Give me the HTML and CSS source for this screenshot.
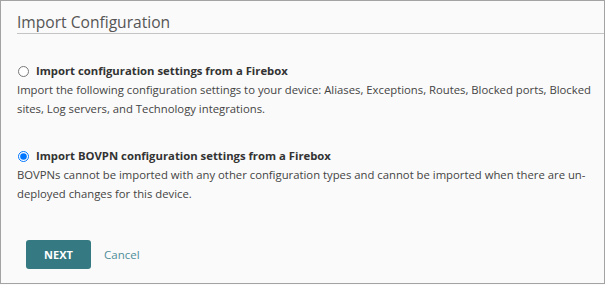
FILE: index.html
```html
<!DOCTYPE html>
<html lang="en">
<head>
  <meta charset="UTF-8">
  <meta name="viewport" content="width=device-width, initial-scale=1.0">
  <title>Import Configuration</title>
  <link rel="stylesheet" href="styles.css">
</head>
<body>
  <div class="panel">
    <h1 class="panel-title">Import Configuration</h1>

    <!-- Option 1 -->
    <div class="option">
      <label class="option-label">
        <input type="radio" name="importType" value="config">
        Import configuration settings from a Firebox
      </label>
      <p class="option-desc">Import the following configuration settings to your device: Aliases, Exceptions, Routes, Blocked ports, Blocked sites, Log servers, and Technology integrations.</p>
    </div>

    <!-- Option 2 -->
    <div class="option">
      <label class="option-label">
        <input type="radio" name="importType" value="bovpn" checked>
        Import BOVPN configuration settings from a Firebox
      </label>
      <p class="option-desc">BOVPNs cannot be imported with any other configuration types and cannot be imported when there are un-deployed changes for this device.</p>
    </div>

    <div class="actions">
      <button class="btn-next">NEXT</button>
      <a href="#" class="btn-cancel">Cancel</a>
    </div>
  </div>
</body>
</html>
```

FILE: styles.css
```css
body {
  margin: 0;
  font-family: 'Open Sans', sans-serif;
  background: #fafafa;
}

.panel {
  width: 605px;
  height: 284px;
  box-sizing: border-box;
  border: 1px solid #a3a3a3;
  background: #fafafa;
  padding-left: 16px;
}

.panel-title {
  margin: 0;
  padding-top: 10px;
  font-size: 15.6px;
  font-weight: normal;
  line-height: 22px;
  color: #555;
  border-bottom: 1px solid #c4c4c4;
}

.option {
  margin-top: 28px;
}

.option + .option {
  margin-top: 29px;
}

.option-label {
  display: flex;
  align-items: center;
  font-size: 11.3px;
  font-weight: bold;
  line-height: 18px;
  color: #333;
}

.option-label input {
  margin: 0 7px 0 1px;
  width: 11px;
  height: 11px;
}

.option-desc {
  margin: 0;
  padding-right: 10px;
  font-size: 11.3px;
  line-height: 19px;
  color: #444;
}

.actions {
  display: flex;
  align-items: center;
  gap: 13px;
  margin-top: 37px;
  padding-left: 9px;
}

.btn-next {
  width: 65px;
  height: 29px;
  border: none;
  border-radius: 3px;
  background-color: #357a82;
  color: #fff;
  font-family: inherit;
  font-size: 11px;
  font-weight: bold;
  cursor: pointer;
}

.btn-cancel {
  font-size: 11.5px;
  color: #4f8e98;
  text-decoration: none;
}
```
